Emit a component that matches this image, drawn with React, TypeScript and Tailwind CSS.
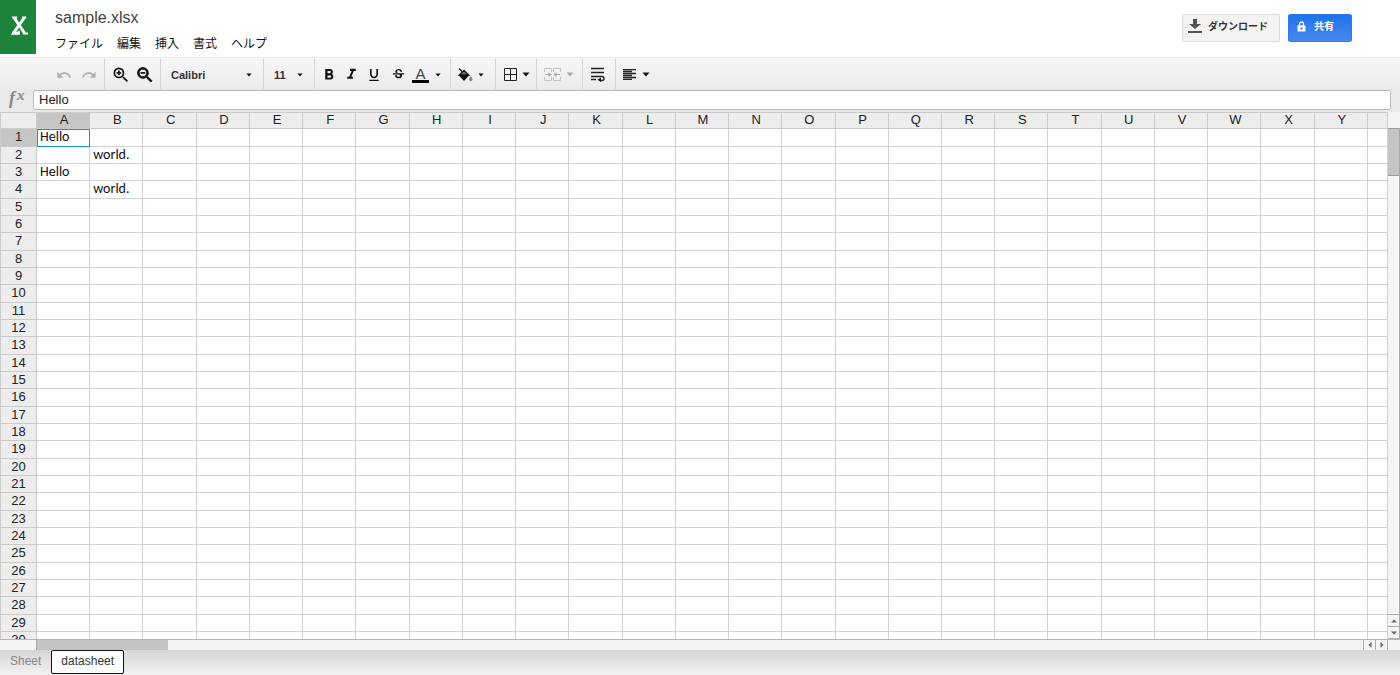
import { useState, type ReactNode } from "react"
import { MdFormatBold, MdFormatItalic, MdFormatUnderlined, MdRedo, MdStrikethroughS, MdUndo, MdZoomIn, MdZoomOut } from "react-icons/md"

const COLUMNS = "ABCDEFGHIJKLMNOPQRSTUVWXY".split("")
const ROWS = Array.from({ length: 30 }, (_, i) => i + 1)
const MENUS = ["ファイル", "編集", "挿入", "書式", "ヘルプ"]
const SHEETS = ["Sheet", "datasheet"]

const CELLS: Record<string, string> = {
  A1: "Hello",
  B2: "world.",
  A3: "Hello",
  B4: "world.",
}

// the md icons start with an empty frame path, so only the last path gets the stroke
const BOLDER = "[&>path:last-child]:stroke-1"

const Caret = ({ big = false }: { big?: boolean }) => (
  <svg
    viewBox="0 0 8 5"
    className={`pointer-events-none shrink-0 ${big ? "w-2 h-[5px]" : "w-[6px] h-1"}`}
    fill="currentColor"
    aria-hidden="true"
  >
    <path d="M0.5 0.5h7L4 4.5z" />
  </svg>
)

const Group = ({ className, children }: { className: string; children: ReactNode }) => (
  <div className={`flex items-center h-[30px] pt-[2px] border-r border-[#d6d6d6] shrink-0 ${className}`}>{children}</div>
)

const Tool = ({ label, className = "", children }: { label: string; className?: string; children: ReactNode }) => (
  <button type="button" aria-label={label} className={`flex items-center justify-center shrink-0 ${className}`}>
    {children}
  </button>
)

const Header = () => (
  <header className="flex h-[57px] shrink-0">
    <div className="w-9 h-[54px] bg-[#1e843c] shrink-0">
      <svg viewBox="0 0 36 54" className="w-9 h-[54px]" fill="none" aria-label="Excel">
        <path d="M14 17.500l10.500 15.500M24.500 17.500L13.500 33" stroke="#fff" strokeWidth="3" />
        <path d="M12 16.500h5v2h-4.500zM22 16.500h4.500l-1 2h-3.500zM22.500 32.500h5.500v2h-5zM11 34.800l1.500-3h4.500l3 -1.300v4.300z" fill="#fff" />
      </svg>
    </div>
    <div className="flex flex-col pl-[19px] pt-2 grow">
      <h1 className="text-base leading-5 text-[#444]">sample.xlsx</h1>
      <nav className="flex gap-[14px] pt-2">
        {MENUS.map(menu => (
          <button key={menu} type="button" className="text-[12px] leading-4 text-[#111]">
            {menu}
          </button>
        ))}
      </nav>
    </div>
    <div className="flex gap-2 pt-[14px] pr-12 shrink-0">
      <button type="button" className="flex items-center w-[98px] h-7 rounded-xs border border-[#dcdcdc] bg-[#f3f3f3] pl-1 pb-1 text-[10px] font-bold text-[#333] whitespace-nowrap">
        <svg viewBox="0 0 16 14" className="w-4 h-[14px] mr-[5px] shrink-0" fill="#555" aria-hidden="true">
          <path d="M6 0h4v5h4L8 10 2 5h4zM1 12h14v2H1z" />
        </svg>
        ダウンロード
      </button>
      <button type="button" className="flex items-center w-16 h-7 rounded-xs border border-[#3079ed] bg-linear-to-b from-[#1a73e8] to-[#4787ed] pl-2 pb-1 text-[10px] font-bold text-white whitespace-nowrap">
        <svg viewBox="0 0 9 11" className="w-[9px] h-[11px] mr-2 shrink-0" aria-hidden="true">
          <path d="M2.500 5V3a2 2 0 0 1 4 0v2" fill="none" stroke="#fff" strokeWidth="1.300" />
          <path d="M0.500 4.500h8v6h-8zM3.500 6.500v2h2v-2z" fill="#fff" fillRule="evenodd" />
        </svg>
        共有
      </button>
    </div>
  </header>
)

const Toolbar = () => (
  <div role="toolbar" className="flex items-center h-8 shrink-0 border-t border-[#ececec] bg-linear-to-b from-[#f7f7f7] to-[#ebebeb] text-[#111] overflow-hidden">
    <Group className="w-[105px] pl-14 gap-[9px] text-[#b0b0b0]">
      <Tool label="元に戻す"><MdUndo size={16} /></Tool>
      <Tool label="やり直し"><MdRedo size={16} /></Tool>
    </Group>
    <Group className="w-14 pl-[6px] gap-1">
      <Tool label="拡大"><MdZoomIn size={20} className={BOLDER} /></Tool>
      <Tool label="縮小"><MdZoomOut size={20} className={BOLDER} /></Tool>
    </Group>
    <Group className="w-[103px] pl-[10px]">
      <select aria-label="フォント" className="appearance-none w-[75px] text-[11px] leading-4 font-bold text-[#333] outline-none">
        <option>Calibri</option>
      </select>
      <Caret />
    </Group>
    <Group className="w-[51px] pl-[10px]">
      <select aria-label="フォントサイズ" className="appearance-none w-[23px] text-[11px] leading-4 font-bold text-[#333] outline-none">
        <option>11</option>
      </select>
      <Caret />
    </Group>
    <Group className="w-[136px] pl-[5px]">
      <Tool label="太字" className="w-[18px]"><MdFormatBold size={18} /></Tool>
      <Tool label="斜体" className="w-[18px] ml-1"><MdFormatItalic size={17} /></Tool>
      <Tool label="下線" className="w-[18px] ml-[5px]"><MdFormatUnderlined size={16} /></Tool>
      <Tool label="取り消し線" className="w-[18px] ml-[6px]"><MdStrikethroughS size={15} /></Tool>
      <Tool label="文字色" className="ml-[5px] gap-[6px]">
        <span className="w-[17px] border-b-3 border-black text-[15px] leading-[13px] text-[#444]">A</span>
        <Caret />
      </Tool>
    </Group>
    <Group className="w-[45px] pl-[6px]">
      <Tool label="塗りつぶしの色" className="gap-[5px]">
        <svg viewBox="0 0 16 14" className="w-4 h-[14px]" aria-hidden="true">
          <path d="M2 0.500l3.500 3.500" stroke="#222" strokeWidth="1.300" />
          <path d="M1.500 7h11l-5.500 6z" fill="#111" />
          <path d="M7 2.500L2.300 7h9.400z" fill="#777" stroke="#111" strokeWidth="1.300" />
          <path d="M13.800 8c1.100 1.700 1.700 2.400 1.700 3.500a1.700 1.700 0 0 1-3.400 0c0-1.100.500-1.800 1.700-3.500z" fill="#888" />
        </svg>
        <Caret />
      </Tool>
    </Group>
    <Group className="w-[41px] pl-2">
      <Tool label="枠線" className="gap-[5px]">
        <svg viewBox="0 0 13 13" className="w-[13px] h-[13px]" fill="none" stroke="#222" strokeWidth="1" aria-hidden="true">
          <path d="M0.500 0.500h12v12h-12zM6.500 0.500v12M0.500 6.500h12" />
        </svg>
        <Caret big />
      </Tool>
    </Group>
    <Group className="w-[46px] pl-[7px]">
      <Tool label="セルを結合" className="gap-[5px] text-[#aaa]">
        <svg viewBox="0 0 17 13" className="w-[17px] h-[13px]" fill="none" stroke="#c4c4c4" strokeWidth="1" aria-hidden="true">
          <path d="M0.500 4V0.500h7V4M0.500 9v3.500h7V9M9.500 4V0.500h7V4M9.500 9v3.500h7V9" />
          <path d="M1 6.500h6M16 6.500h-6" stroke="#aaa" />
          <path d="M4.500 4l3 2.500-3 2.500zM12.500 4l-3 2.500 3 2.500z" fill="#aaa" stroke="none" />
        </svg>
        <Caret big />
      </Tool>
    </Group>
    <Group className="w-[33px] pl-2">
      <Tool label="折り返し">
        <svg viewBox="0 0 14 15" className="w-[14px] h-[15px]" fill="none" stroke="#222" strokeWidth="1.300" aria-hidden="true">
          <path d="M0 1.500h13M0 5.500h13M0 9.500h11a2 2 0 0 1 0 4h-2M0 12.500h5" />
          <path d="M10 10.500v4.500l-3.500-2.200z" fill="#111" stroke="none" />
        </svg>
      </Tool>
    </Group>
    <div className="flex items-center pl-[7px] pt-[2px]">
      <Tool label="配置" className="gap-[5px]">
        <svg viewBox="0 0 14 11" className="w-[14px] h-[11px]" stroke="#222" strokeWidth="1.300" aria-hidden="true">
          <path d="M0 0.500h13M0 2.500h9M0 4.500h13M0 6.500h9M0 8.500h13M0 10.500h9" />
        </svg>
        <Caret big />
      </Tool>
    </div>
  </div>
)

const FormulaBar = ({ value }: { value: string }) => (
  <div className="flex h-[23px] shrink-0 items-start pt-px pr-[9px] bg-[#e9e9e9]">
    <label htmlFor="formula" className="flex items-start w-[33px] pl-[9px] gap-[2px] font-['Liberation_Serif',serif] italic font-bold text-[#888] shrink-0">
      <span className="text-[18px] leading-[16px]">f</span>
      <span className="text-[15px] leading-[10px]">x</span>
    </label>
    <input
      id="formula"
      defaultValue={value}
      className="grow h-5 min-w-0 rounded-xs border border-[#bbb] bg-white px-[5px] pb-[2px] text-[13px] leading-4 text-[#222] outline-none"
    />
  </div>
)

const Grid = ({ selected, onSelect }: { selected: string; onSelect: (id: string) => void }) => (
  <div className="grow min-w-0 overflow-hidden">
    <table className="table-fixed w-full border-separate border-spacing-0 text-[13px]">
      <colgroup>
        <col className="w-[37px]" />
        {COLUMNS.map(col => <col key={col} />)}
        <col className="w-5" />
      </colgroup>
      <thead>
        <tr className="h-[17px] bg-[#ededed] text-[#222]">
          <th aria-label="すべて選択" className="p-0 border-l border-t border-r border-b border-[#cbcbcb]" />
          {COLUMNS.map(col => (
            <th
              key={col}
              scope="col"
              className={`p-0 pl-[2px] pb-[2px] border-t border-r border-b border-[#cbcbcb] font-normal leading-[13px] ${selected.startsWith(col) ? "bg-[#c6c6c6]" : ""}`}
            >
              {col}
            </th>
          ))}
          <th className="p-0 border-t border-r border-b border-[#cbcbcb]" />
        </tr>
      </thead>
      <tbody>
        {ROWS.map(row => (
          <tr key={row} className={row % 3 === 1 ? "h-[18px]" : "h-[17px]"}>
            <th
              scope="row"
              className={`p-0 pb-px border-l border-r border-b border-[#cbcbcb] font-normal leading-[14px] text-[#222] ${selected.slice(1) === String(row) ? "bg-[#c6c6c6]" : "bg-[#ededed]"}`}
            >
              {row}
            </th>
            {COLUMNS.map(col => {
              const id = `${col}${row}`
              return (
                <td
                  key={id}
                  onClick={() => onSelect(id)}
                  className={`p-0 pl-[3px] pb-px border-r border-b font-[Carlito,Lato,sans-serif] text-[14px] leading-[14px] text-[#111] whitespace-nowrap
                    ${selected === id ? "border-[#1a8fe3] shadow-[inset_1px_1px_0_#1a8fe3]" : "border-[#d2d2d2]"}`}
                >
                  {CELLS[id]}
                </td>
              )
            })}
            <td className="p-0 border-r border-b border-[#d2d2d2]" />
          </tr>
        ))}
      </tbody>
    </table>
  </div>
)

const ScrollArrow = ({ label, className, d }: { label: string; className: string; d: string }) => (
  <button type="button" aria-label={label} className={`flex items-center justify-center shrink-0 bg-[#f4f4f4] border-[#aaa] ${className}`}>
    <svg viewBox="0 0 6 6" className="w-[6px] h-[6px]" fill="#666" aria-hidden="true">
      <path d={d} />
    </svg>
  </button>
)

const VerticalScroll = () => (
  <div className="flex flex-col w-3 shrink-0 bg-[#f4f4f4]">
    <div className="h-4 shrink-0" />
    <div className="grow border-r border-[#aaa]">
      <div className="h-12 bg-[#c4c4c4] border-t border-b border-[#999]" />
    </div>
    <ScrollArrow label="上へ" className="h-[13px] border-t border-b border-r" d="M0 4.500h6L3 1.500z" />
    <ScrollArrow label="下へ" className="h-3 border-b border-r" d="M0 1.500h6L3 4.500z" />
  </div>
)

const HorizontalScroll = () => (
  <div className="flex h-[11px] shrink-0 border-t border-[#b5b5b5] bg-[#f4f4f4] pl-9 pr-3">
    <div className="grow">
      <div className="w-[132px] h-full bg-[#c4c4c4] border-l border-[#aaa]" />
    </div>
    <ScrollArrow label="左へ" className="w-[13px] border-l border-r" d="M4.500 0v6L1.500 3z" />
    <ScrollArrow label="右へ" className="w-3 border-r" d="M1.500 0v6L4.500 3z" />
  </div>
)

const App = () => {
  const [selected, setSelected] = useState("A1")
  const [sheet, setSheet] = useState("datasheet")

  return (
    <div className="flex flex-col h-screen overflow-hidden bg-white font-['Liberation_Sans','Noto_Sans_CJK_JP',sans-serif]">
      <Header />
      <Toolbar />
      <FormulaBar key={selected} value={CELLS[selected] ?? ""} />
      <div className="flex grow min-h-0">
        <Grid selected={selected} onSelect={setSelected} />
        <VerticalScroll />
      </div>
      <HorizontalScroll />
      <div role="tablist" className="flex h-[25px] shrink-0 bg-linear-to-b from-[#d6d6d6] to-[#f2f2f2]">
        {SHEETS.map(name => (
          <button
            key={name}
            type="button"
            role="tab"
            aria-selected={sheet === name}
            onClick={() => setSheet(name)}
            className={`h-6 px-[9px] pb-[3px] text-[12px] leading-5 border ${sheet === name ? "rounded-xs border-[#111] bg-white text-[#333]" : "border-transparent text-[#888]"}`}
          >
            {name}
          </button>
        ))}
      </div>
    </div>
  )
}

export default App
